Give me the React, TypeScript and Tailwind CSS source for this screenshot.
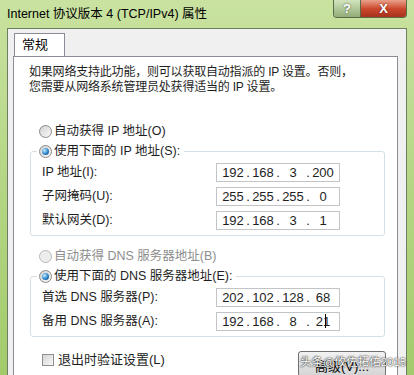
import { Fragment, type ReactNode } from "react";

const ui = "font-['Liberation_Sans','Noto_Sans_CJK_SC',sans-serif]";

function Radio({ checked = false, disabled = false }: { checked?: boolean; disabled?: boolean }) {
  return (
    <span
      className={`inline-flex h-[13px] w-[13px] shrink-0 items-center justify-center rounded-full border ${
        disabled ? "border-[#b8b8b8] bg-[#ededed]" : "border-[#8a8a8a] bg-gradient-to-br from-[#d2d2d2] to-[#fafafa]"
      }`}
    >
      {checked && (
        <span className="h-[7px] w-[7px] rounded-full bg-[radial-gradient(circle_at_35%_35%,#c6ecff,#2a84c8_55%,#0c3f70)]" />
      )}
    </span>
  );
}

function IpField({ parts, caret = false }: { parts: string[]; caret?: boolean }) {
  return (
    <div className="flex h-[19px] w-[124px] items-center border border-[#c2c4c8] bg-white pl-[4px] text-[13px] leading-none text-[#1e1e1e]">
      {parts.map((p, i) => (
        <Fragment key={i}>
          {i > 0 && <span className="w-[6px] text-center">.</span>}
          <span className="relative w-[24px] text-center">
            {p}
            {caret && i === parts.length - 1 && (
              <span className="absolute left-[14px] top-[-1px] h-[14px] w-[1px] bg-black" />
            )}
          </span>
        </Fragment>
      ))}
    </div>
  );
}

function Row({ label, parts, caret }: { label: string; parts: string[]; caret?: boolean }) {
  return (
    <div className="flex h-[19px] items-center">
      <span className="w-[174px] text-[12.5px] text-[#1e1e1e]">{label}</span>
      <IpField parts={parts} caret={caret} />
    </div>
  );
}

function Group({ title, children }: { title: string; children: ReactNode }) {
  return (
    <div className="ml-[1px] mt-[12px] rounded-[3px] border border-[#d5dfe5] pb-[5px]">
      <div className="-mt-[9px] ml-[6px] flex h-[16px] w-fit items-center gap-[2px] bg-white pl-[2px] pr-[4px] text-[12.5px]">
        <Radio checked />
        {title}
      </div>
      <div className="mt-[4px] flex flex-col gap-[5px] pl-[11px]">{children}</div>
    </div>
  );
}

export default function App() {
  return (
    <div className={`${ui} flex h-[375px] w-[414px] flex-col overflow-hidden bg-gradient-to-b from-[#c9e2a0] via-[#b4d684] to-[#a3cb6c]`}>
      {/* title bar */}
      <div className="flex h-[28px] shrink-0 items-start">
        <span className="ml-[7px] mt-[5px] text-[12.5px] leading-[18px] text-black">Internet 协议版本 4 (TCP/IPv4) 属性</span>
        <div className="ml-auto mr-[7px] flex h-[18px] overflow-hidden rounded-b-[4px] border border-t-0 border-[#5b6b4a]">
          <div className="flex w-[26px] items-center justify-center bg-gradient-to-b from-[#d3e4bd] to-[#92ad78] text-[13px] font-bold text-white [text-shadow:0_0_2px_#3a4a2a]">
            ?
          </div>
          <div className="flex w-[46px] items-center justify-center border-l border-[#5b6b4a] bg-gradient-to-b from-[#e8a08a] via-[#cc4a2e] to-[#a8321c] text-[13px] font-bold text-white [text-shadow:0_0_2px_#5a1a10]">
            X
          </div>
        </div>
      </div>

      {/* client area */}
      <div className="mx-[7px] flex flex-1 flex-col border border-b-0 border-[#6f7d62] bg-[#f0f0f0] pt-[4px]">
        <div className="ml-[6px] flex h-[23px] w-[51px] items-center border border-b-0 border-[#898c95] bg-white pl-[7px] text-[13px] text-black">
          常规
        </div>
        <div className="mr-[8px] ml-[5px] flex flex-1 flex-col border border-b-0 border-[#898c95] bg-white pl-[15px] pr-[12px] pt-[8px] text-[#1e1e1e]">
          <p className="text-[12px] leading-[15px] tracking-[-0.2px]">
            如果网络支持此功能，则可以获取自动指派的 IP 设置。否则，
            <br />
            您需要从网络系统管理员处获得适当的 IP 设置。
          </p>

          <label className="mt-[28px] ml-[10px] flex h-[16px] items-center gap-[2px] text-[12.5px]">
            <Radio />
            自动获得 IP 地址(O)
          </label>

          <Group title="使用下面的 IP 地址(S):">
            <Row label="IP 地址(I):" parts={["192", "168", "3", "200"]} />
            <Row label="子网掩码(U):" parts={["255", "255", "255", "0"]} />
            <Row label="默认网关(D):" parts={["192", "168", "3", "1"]} />
          </Group>

          <label className="mt-[12px] ml-[10px] flex h-[16px] items-center gap-[2px] text-[12.5px] text-[#8d8d8d]">
            <Radio disabled />
            自动获得 DNS 服务器地址(B)
          </label>

          <Group title="使用下面的 DNS 服务器地址(E):">
            <Row label="首选 DNS 服务器(P):" parts={["202", "102", "128", "68"]} />
            <Row label="备用 DNS 服务器(A):" parts={["192", "168", "8", "21"]} caret />
          </Group>

          <div className="mt-[14px] flex items-start">
            <label className="ml-[13px] mt-[1px] flex h-[16px] items-center gap-[4px] text-[13px]">
              <span className="h-[12px] w-[12px] border border-[#8f8f8f] bg-gradient-to-br from-[#d6d6d6] to-[#f7f7f7]" />
              退出时验证设置(L)
            </label>
            <div className="relative ml-auto mr-[-1px]">
              <button className="flex h-[26px] w-[88px] items-center justify-center rounded-[3px] border border-[#707070] bg-gradient-to-b from-[#f2f2f2] to-[#d4d4d4] pt-[5px] text-[13px] text-black">
                高级(V)...
              </button>
              <span className="absolute left-[2px] top-[3px] whitespace-nowrap text-[11.5px] text-white [text-shadow:0_0_1px_#222,0_0_2px_#222]">
                头条@攸佐拓佑2015
              </span>
            </div>
          </div>
        </div>
      </div>
    </div>
  );
}
